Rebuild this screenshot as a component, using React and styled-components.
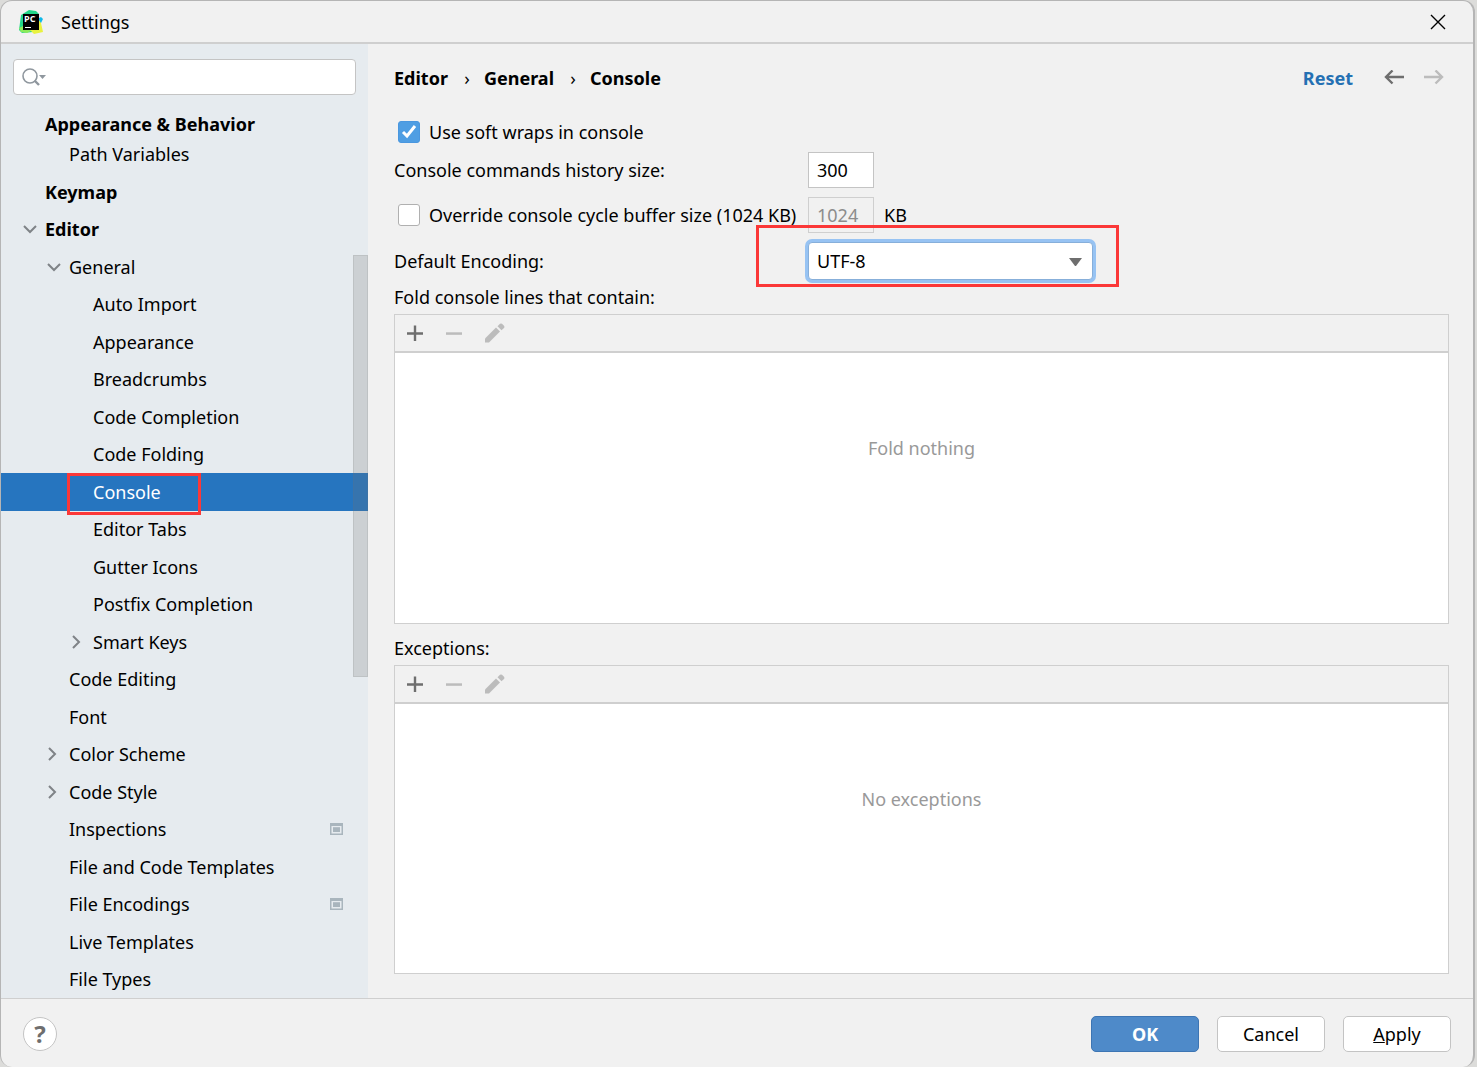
import React from 'react';
import styled, { createGlobalStyle, css } from 'styled-components';

const treeItems = [
    { label: "Keymap", level: 0, bold: true },
    { label: "Editor", level: 0, bold: true, arrow: "down" },
    { label: "General", level: 1, arrow: "down" },
    { label: "Auto Import", level: 2 },
    { label: "Appearance", level: 2 },
    { label: "Breadcrumbs", level: 2 },
    { label: "Code Completion", level: 2 },
    { label: "Code Folding", level: 2 },
    { label: "Console", level: 2, selected: true },
    { label: "Editor Tabs", level: 2 },
    { label: "Gutter Icons", level: 2 },
    { label: "Postfix Completion", level: 2 },
    { label: "Smart Keys", level: 2, arrow: "right" },
    { label: "Code Editing", level: 1 },
    { label: "Font", level: 1 },
    { label: "Color Scheme", level: 1, arrow: "right" },
    { label: "Code Style", level: 1, arrow: "right" },
    { label: "Inspections", level: 1, project: true },
    { label: "File and Code Templates", level: 1 },
    { label: "File Encodings", level: 1, project: true },
    { label: "Live Templates", level: 1 },
    { label: "File Types", level: 1 },
];

function Arrow({ direction }) {
    return (
        <svg width="16" height="16" viewBox="0 0 16 16" fill="none" stroke="#7f8387" strokeWidth="2">
            <path d={direction === "down" ? "M3 5 L9 11 L15 5" : "M4 2 L10 8 L4 14"}/>
        </svg>
    )
}

function ProjectIcon() {
    return (
        <svg width="13" height="12" viewBox="0 0 13 12">
            <path fill="#a9b5bd" fillRule="evenodd" d="M0 0H13V12H0Z M1.500 3V10.500H11.500V3Z"/>
            <path fill="#a9b5bd" d="M3 4.200H10V9H3Z"/>
        </svg>
    )
}

function Logo() {
    return (
        <svg width="24" height="24" viewBox="0 0 24 24">
            <path fill="#21d789" d="M2 5 L10 0 L17 1 L20 4 L14 22 L3 23 L0 20Z"/>
            <path fill="#8bea5a" d="M0 18 L6 15 L18 18 L12 21 L8 23 L2 22Z"/>
            <path fill="#0fb8e8" d="M19 4 L20 8 L22 7 L24 9 L22 13 L18 13Z"/>
            <path fill="#e9f23f" d="M19 9 L22 13 L24 22 L15 24 L11 20 L18 16Z"/>
            <rect x="4" y="4" width="16" height="16" fill="#000"/>
            <rect x="6" y="17" width="6" height="1" fill="#fff"/>
            <text x="5" y="12" fontSize="9" fontWeight="700" fontFamily="Open Sans, sans-serif" fill="#fff">PC</text>
        </svg>
    )
}

function FilterList({ id, title, emptyText }) {
    return (
        <ListSection aria-labelledby={id}>
            <ListTitle id={id}>{title}</ListTitle>
            <ListBox>
                <ListToolbar>
                    <ToolButton aria-label="Add">
                        <svg width="16" height="16" viewBox="0 0 16 16">
                            <path fill="#6e6e6e" d="M6.800 0.500H9.200V7.300H16V9.700H9.200V16H6.800V9.700H0V7.300H6.800Z"/>
                        </svg>
                    </ToolButton>
                    <ToolButton aria-label="Remove" disabled>
                        <svg width="16" height="16" viewBox="0 0 16 16">
                            <path fill="#bcbcbc" d="M0 7.300H16V9.800H0Z"/>
                        </svg>
                    </ToolButton>
                    <ToolButton aria-label="Edit" disabled>
                        <svg width="20" height="20" viewBox="0 0 20 20">
                            <path fill="#bcbcbc" d="M0 15.500 L11 4.500 L15 8.500 L4 19.500 H0Z"/>
                            <path fill="#bcbcbc" d="M12.500 3.200 L15 0.800 Q16 0 17 0.800 L19 2.800 Q20 4 19 5 L16.500 7.200Z"/>
                        </svg>
                    </ToolButton>
                </ListToolbar>
                <ListBody>{emptyText}</ListBody>
            </ListBox>
        </ListSection>
    )
}

export default function App() {
    return (
        <>
            <GlobalStyle/>
            <Window>
                <TitleBar>
                    <Logo/>
                    <WindowTitle>Settings</WindowTitle>
                    <IconButton aria-label="Close">
                        <svg width="16" height="16" viewBox="0 0 16 16" fill="none" stroke="#000" strokeWidth="1.4">
                            <path d="M1 1 L15 15 M15 1 L1 15"/>
                        </svg>
                    </IconButton>
                </TitleBar>
                <Content>
                    <Sidebar>
                        <SearchBox>
                            <svg width="26" height="20" viewBox="0 0 26 20" fill="none" stroke="#8f979e" strokeWidth="1.600">
                                <circle cx="8" cy="9" r="7"/>
                                <path strokeWidth="2.400" d="M12.500 13.500 L17 18"/>
                                <path fill="#8f979e" stroke="none" d="M17 8H24L20.500 12Z"/>
                            </svg>
                            <SearchInput type="text" aria-label="Search settings"/>
                        </SearchBox>
                        <TreeHeading>Appearance &amp; Behavior</TreeHeading>
                        <TreeSubHeading>Path Variables</TreeSubHeading>
                        <Tree>
                            {treeItems.map((item) => (
                                <TreeItem key={item.label} $level={item.level} $bold={item.bold} $selected={item.selected}>
                                    <ArrowSlot>{item.arrow && <Arrow direction={item.arrow}/>}</ArrowSlot>
                                    <span>{item.label}</span>
                                    {item.project && <ProjectMark><ProjectIcon/></ProjectMark>}
                                    {item.selected && <ItemHighlight/>}
                                </TreeItem>
                            ))}
                        </Tree>
                        <ScrollThumb/>
                    </Sidebar>
                    <Main>
                        <Header>
                            <Crumb>Editor</Crumb>
                            <Separator/>
                            <Crumb>General</Crumb>
                            <Separator/>
                            <Crumb>Console</Crumb>
                            <HeaderActions>
                                <ResetLink href="#reset">Reset</ResetLink>
                                <IconButton aria-label="Back">
                                    <svg width="20" height="16" viewBox="0 0 20 16" fill="none" stroke="#6e6e6e" strokeWidth="2.400">
                                        <path d="M20 7H2 M8.500 0.500 L2 7 L8.500 13.500"/>
                                    </svg>
                                </IconButton>
                                <IconButton aria-label="Forward" disabled>
                                    <svg width="20" height="16" viewBox="0 0 20 16" fill="none" stroke="#bcbcbc" strokeWidth="2.400">
                                        <path d="M0 7H18 M11.500 0.500 L18 7 L11.500 13.500"/>
                                    </svg>
                                </IconButton>
                            </HeaderActions>
                        </Header>
                        <CheckLabel>
                            <CheckBox type="checkbox" defaultChecked/>
                            Use soft wraps in console
                        </CheckLabel>
                        <Form>
                            <label htmlFor="history">Console commands history size:</label>
                            <NumberInput id="history" type="text" defaultValue="300"/>
                            <CheckLabel>
                                <CheckBox type="checkbox"/>
                                Override console cycle buffer size (1024 KB)
                            </CheckLabel>
                            <BufferSize>
                                <NumberInput type="text" aria-label="Buffer size" defaultValue="1024" disabled/>
                                KB
                            </BufferSize>
                            <label htmlFor="encoding">Default Encoding:</label>
                            <SelectWrap>
                                <Select id="encoding" defaultValue="UTF-8">
                                    <option>UTF-8</option>
                                </Select>
                                <SelectArrow width="13" height="8" viewBox="0 0 13 8">
                                    <path fill="#6e6e6e" d="M0 0H13L7 8H6Z"/>
                                </SelectArrow>
                                <SelectHighlight/>
                            </SelectWrap>
                        </Form>
                        <FilterList id="fold" title="Fold console lines that contain:" emptyText="Fold nothing"/>
                        <FilterList id="exceptions" title="Exceptions:" emptyText="No exceptions"/>
                    </Main>
                </Content>
                <Footer>
                    <HelpButton aria-label="Help">?</HelpButton>
                    <Button $primary>OK</Button>
                    <Button>Cancel</Button>
                    <Button><u>A</u>pply</Button>
                </Footer>
            </Window>
        </>
    )
};

const GlobalStyle = createGlobalStyle`
    *{
        box-sizing: border-box;
    }
    body{
        margin: 0;
        background-color: #dcdcda;
        color: #000;
        font-family: "Noto Sans", "Open Sans", sans-serif;
        font-size: 18px;
        line-height: 24px;
    }
    button, input, select{
        font: inherit;
        color: inherit;
    }
    svg{
        display: block;
        flex: none;
    }
`;

const highlight = css`
    position: absolute;
    border: 3px solid #fb3838;
    pointer-events: none;
`;

const Window = styled.div`
    display: flex;
    flex-direction: column;
    min-height: 100vh;
    margin-right: 2px;
    border: 1px solid #b5b5b5;
    border-right-width: 2px;
    border-bottom: none;
    border-radius: 12px;
    background-color: #f1f1f1;
    overflow: hidden;
`;

const TitleBar = styled.header`
    display: flex;
    align-items: center;
    height: 43px;
    padding: 0 27px 0 18px;
    border-bottom: 2px solid #cfcfcf;
`;

const WindowTitle = styled.h1`
    flex: 1;
    margin: 0 0 0 18px;
    font-size: 18px;
    font-weight: 400;
`;

const IconButton = styled.button`
    padding: 0;
    border: none;
    background: none;
`;

const Content = styled.div`
    display: flex;
    flex: 1;
`;

const Sidebar = styled.nav`
    position: relative;
    display: flex;
    flex-direction: column;
    width: 367px;
    flex: none;
    padding-top: 15px;
    background-color: #e6ebef;
`;

const SearchBox = styled.div`
    display: flex;
    align-items: center;
    height: 36px;
    margin: 0 12px 14px;
    padding-left: 8px;
    border: 1px solid #c4c4c4;
    border-radius: 4px;
    background-color: #fff;
`;

const SearchInput = styled.input`
    flex: 1;
    border: none;
    outline: none;
    background: none;
`;

const TreeHeading = styled.div`
    height: 30px;
    padding-left: 44px;
    line-height: 30px;
    font-weight: 700;
`;

const TreeSubHeading = styled.div`
    height: 34px;
    padding-left: 68px;
    line-height: 30px;
`;

const Tree = styled.ul`
    display: flex;
    flex-direction: column;
    flex: 1;
    margin: 0;
    padding: 0;
    list-style: none;
`;

const TreeItem = styled.li`
    position: relative;
    display: flex;
    align-items: center;
    flex: 1 1 32px;
    padding-left: ${props => 20 + props.$level * 24}px;
    font-weight: ${props => props.$bold ? 700 : 400};
    ${props => props.$selected && css`
        background-color: #2675bf;
        color: #fff;
    `}
`;

const ArrowSlot = styled.span`
    width: 24px;
    flex: none;
`;

const ProjectMark = styled.span`
    margin-left: auto;
    padding-right: 25px;
`;

const ItemHighlight = styled.span`
    ${highlight}
    top: 0;
    left: 66px;
    width: 134px;
    height: 42px;
    z-index: 1;
`;

const ScrollThumb = styled.div`
    position: absolute;
    top: 211px;
    right: 0;
    width: 15px;
    height: 422px;
    border: 1px solid rgba(115, 115, 115, 0.15);
    background-color: rgba(115, 115, 115, 0.22);
`;

const Main = styled.main`
    display: flex;
    flex-direction: column;
    flex: 1;
    min-width: 0;
    padding: 19px 24px 24px 26px;
`;

const Header = styled.div`
    display: flex;
    align-items: center;
    height: 30px;
    margin-bottom: 27px;
`;

const Crumb = styled.span`
    font-weight: 700;
`;

const Separator = styled.span`
    width: 36px;
    padding-left: 2px;
    text-align: center;
    &::before{
        content: "›";
    }
`;

const HeaderActions = styled.div`
    display: flex;
    align-items: center;
    gap: 20px;
    margin-left: auto;
    padding-right: 5px;
`;

const ResetLink = styled.a`
    margin-right: 11px;
    color: #2470b3;
    font-weight: 700;
    text-decoration: none;
`;

const CheckLabel = styled.label`
    display: flex;
    align-items: center;
    gap: 9px;
    padding-left: 4px;
    white-space: nowrap;
`;

const CheckBox = styled.input`
    appearance: none;
    width: 22px;
    height: 22px;
    flex: none;
    margin: 0;
    border: 1px solid #b0b0b0;
    border-radius: 3px;
    background-color: #fff;
    &:checked{
        border-color: #4a97df;
        background: #4f9ee3 url("data:image/svg+xml,%3Csvg xmlns='http://www.w3.org/2000/svg' viewBox='0 0 20 20' fill='none' stroke='white' stroke-width='3'%3E%3Cpath d='M4 10 L8 14 L16 4'/%3E%3C/svg%3E") center / 20px 20px no-repeat;
    }
`;

const Form = styled.div`
    display: grid;
    grid-template-columns: 414px 1fr;
    align-items: center;
    row-gap: 9px;
    margin: 8px 0 5px;
`;

const NumberInput = styled.input`
    width: 66px;
    height: 36px;
    padding: 0 8px;
    border: 1px solid #c4c4c4;
    border-radius: 0;
    background-color: #fff;
    &:disabled{
        border-color: #cfcfcf;
        background-color: #f1f1f1;
        color: #8c8c8c;
    }
`;

const BufferSize = styled.div`
    display: flex;
    align-items: center;
    gap: 10px;
`;

const SelectWrap = styled.div`
    position: relative;
    width: 285px;
`;

const Select = styled.select`
    appearance: none;
    display: block;
    width: 100%;
    height: 38px;
    padding: 0 8px;
    border: 1px solid #87afda;
    border-radius: 4px;
    background-color: #fff;
    box-shadow: 0 0 0 3px #97c3f3;
    outline: none;
`;

const SelectArrow = styled.svg`
    position: absolute;
    top: 16px;
    right: 11px;
    pointer-events: none;
`;

const SelectHighlight = styled.span`
    ${highlight}
    top: -17px;
    left: -52px;
    width: 363px;
    height: 62px;
`;

const ListSection = styled.section`
    display: flex;
    flex-direction: column;
    flex: 1;
    & + &{
        margin-top: 12px;
    }
`;

const ListTitle = styled.div`
    margin-bottom: 5px;
`;

const ListBox = styled.div`
    display: flex;
    flex-direction: column;
    flex: 1;
    border: 1px solid #cfcfcf;
`;

const ListToolbar = styled.div`
    display: flex;
    align-items: center;
    gap: 23px;
    height: 38px;
    padding-left: 12px;
    border-bottom: 2px solid #cfcfcf;
`;

const ToolButton = styled(IconButton)`
    display: flex;
`;

const ListBody = styled.div`
    flex: 1;
    padding-top: 83px;
    background-color: #fff;
    color: #999;
    text-align: center;
`;

const Footer = styled.footer`
    display: flex;
    align-items: center;
    gap: 18px;
    height: 69px;
    padding: 2px 22px 0 22px;
    border-top: 1px solid #cfcfcf;
`;

const HelpButton = styled.button`
    width: 34px;
    height: 34px;
    margin-right: auto;
    padding: 0;
    border: 1px solid #c4c4c4;
    border-radius: 50%;
    background-color: #fff;
    color: #6e6e6e;
    font-size: 24px;
    font-weight: 700;
`;

const Button = styled.button`
    width: 108px;
    height: 36px;
    padding: 0;
    border: 1px solid ${props => props.$primary ? "#3d75b3" : "#c4c4c4"};
    border-radius: 5px;
    background-color: ${props => props.$primary ? "#4e8ac9" : "#fff"};
    color: ${props => props.$primary ? "#fff" : "#000"};
    font-weight: ${props => props.$primary ? 700 : 400};
`;
